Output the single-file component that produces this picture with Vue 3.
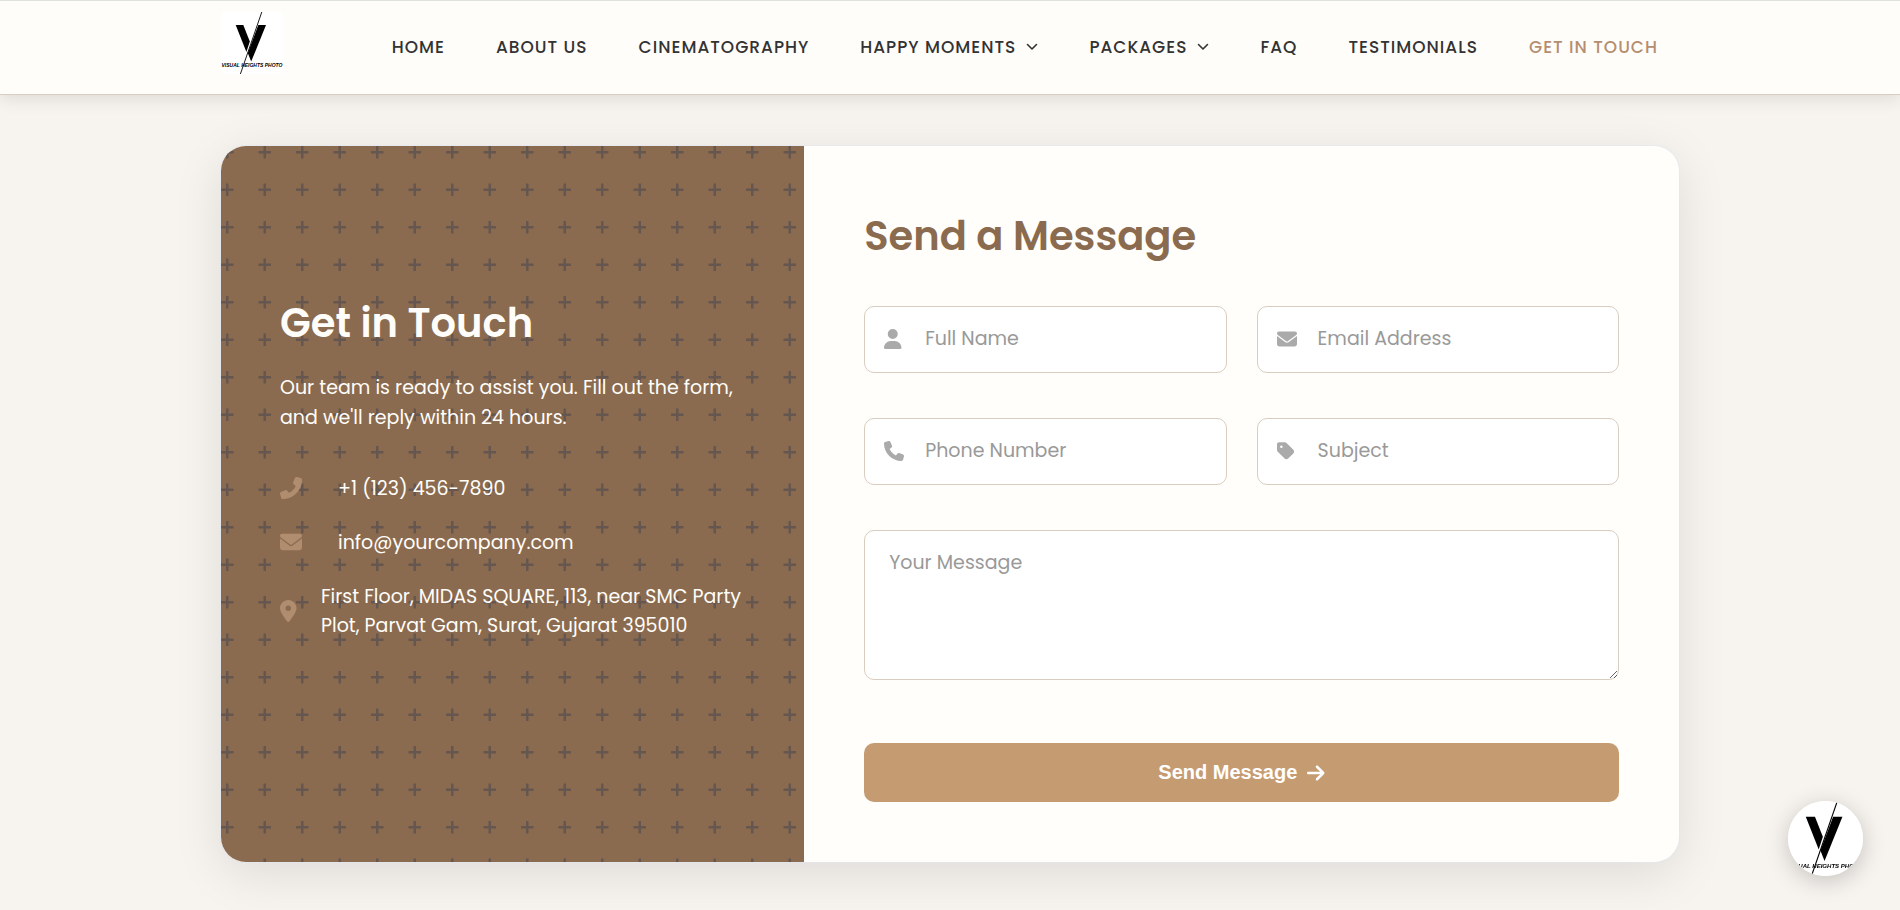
<template>
  <div class="page">
    <!-- Logo artwork, shared by the header and the floating button -->
    <svg class="sprite" aria-hidden="true">
      <symbol id="logo" viewBox="0 0 62 62">
        <rect width="62" height="62" rx="6" fill="#fff" />
        <path d="M14.7 13H22.3L28.8 29.6L25.4 40z" />
        <path d="M37.3 13H45L30.2 49.6L26.8 41z" />
        <path d="M40.8 0L19.4 62" stroke="#000" stroke-width="0.9" />
        <text x="0.5" y="55.2" class="logo-text">VISUAL HEIGHTS PHOTO</text>
      </symbol>
    </svg>

    <header class="site-header">
      <div class="header-inner">
        <a href="#" class="logo-link" aria-label="Visual Heights Photo">
          <svg class="logo"><use href="#logo" /></svg>
        </a>
        <nav class="nav">
          <a
            v-for="link in links"
            :key="link.label"
            href="#"
            class="nav-link"
            :class="{ active: link.active }"
          >
            {{ link.label }}
            <svg v-if="link.dropdown" class="chevron" viewBox="0 0 12 8">
              <path d="M1.5 1.5L6 6L10.5 1.5" />
            </svg>
          </a>
        </nav>
      </div>
    </header>

    <main class="contact-card">
      <section class="info-panel">
        <h2 class="title">Get in Touch</h2>
        <p class="info-text">
          Our team is ready to assist you. Fill out the form, and we'll reply within 24 hours.
        </p>
        <ul class="info-list">
          <li v-for="item in contacts" :key="item.text" class="info-item">
            <span class="info-icon" :class="{ narrow: item.icon === 'location' }">
              <svg :class="{ flipped: item.icon === 'phone' }" :viewBox="icons[item.icon].box">
                <path :d="icons[item.icon].path" />
              </svg>
            </span>
            <span>{{ item.text }}</span>
          </li>
        </ul>
      </section>

      <section class="form-panel">
        <h2 class="title">Send a Message</h2>
        <form class="form" @submit.prevent="sendMessage">
          <div v-for="field in fields" :key="field.id" class="field">
            <label :for="field.id" class="field-label">{{ field.label }}</label>
            <svg class="field-icon" :viewBox="icons[field.icon].box" aria-hidden="true">
              <path :d="icons[field.icon].path" />
            </svg>
            <input :id="field.id" v-model="form[field.id]" :type="field.type" :placeholder="field.label" />
          </div>
          <div class="field wide">
            <label for="message" class="field-label">Your Message</label>
            <textarea id="message" v-model="form.message" placeholder="Your Message"></textarea>
          </div>
          <button type="submit" class="submit-btn">
            Send Message
            <svg :viewBox="icons.arrow.box" aria-hidden="true"><path :d="icons.arrow.path" /></svg>
          </button>
        </form>
      </section>
    </main>

    <button type="button" class="floating-btn" aria-label="Chat with us">
      <svg><use href="#logo" /></svg>
    </button>
  </div>
</template>

<script setup>
import { reactive } from 'vue';

const links = [
  { label: 'HOME' },
  { label: 'ABOUT US' },
  { label: 'CINEMATOGRAPHY' },
  { label: 'HAPPY MOMENTS', dropdown: true },
  { label: 'PACKAGES', dropdown: true },
  { label: 'FAQ' },
  { label: 'TESTIMONIALS' },
  { label: 'GET IN TOUCH', active: true },
];

const contacts = [
  { icon: 'phone', text: '+1 (123) 456-7890' },
  { icon: 'envelope', text: 'info@yourcompany.com' },
  { icon: 'location', text: 'First Floor, MIDAS SQUARE, 113, near SMC Party Plot, Parvat Gam, Surat, Gujarat 395010' },
];

const fields = [
  { id: 'name', label: 'Full Name', icon: 'user', type: 'text' },
  { id: 'email', label: 'Email Address', icon: 'envelope', type: 'email' },
  { id: 'phone', label: 'Phone Number', icon: 'phone', type: 'tel' },
  { id: 'subject', label: 'Subject', icon: 'tag', type: 'text' },
];

const icons = {
  user: {
    box: '0 0 448 512',
    path: 'M224 256A128 128 0 1 0 224 0a128 128 0 1 0 0 256zm-45.7 48C79.8 304 0 383.8 0 482.3C0 498.7 13.3 512 29.7 512l388.6 0c16.4 0 29.7-13.3 29.7-29.7C448 383.8 368.2 304 269.7 304l-91.4 0z',
  },
  envelope: {
    box: '0 0 512 512',
    path: 'M48 64C21.5 64 0 85.5 0 112c0 15.1 7.1 29.3 19.2 38.4L236.8 313.6c11.4 8.5 27 8.5 38.4 0L492.8 150.4c12.1-9.1 19.2-23.3 19.2-38.4c0-26.5-21.5-48-48-48L48 64zM0 176L0 384c0 35.3 28.7 64 64 64l384 0c35.3 0 64-28.7 64-64l0-208L294.4 339.2c-22.8 17.1-54 17.1-76.8 0L0 176z',
  },
  phone: {
    box: '0 0 512 512',
    path: 'M164.9 24.6c-7.7-18.6-28-28.5-47.4-23.2l-88 24C12.1 30.2 0 46 0 64C0 311.4 200.6 512 448 512c18 0 33.8-12.1 38.6-29.5l24-88c5.3-19.4-4.6-39.7-23.2-47.4l-96-40c-16.3-6.8-35.2-2.1-46.3 11.6L304.7 368C234.3 334.7 177.3 277.7 144 207.3L193.3 167c13.7-11.2 18.4-30 11.6-46.3l-40-96z',
  },
  tag: {
    box: '0 0 448 512',
    path: 'M0 80V229.5c0 17 6.7 33.3 18.7 45.3l176 176c25 25 65.5 25 90.5 0L418.7 317.3c25-25 25-65.5 0-90.5l-176-176c-12-12-28.3-18.7-45.3-18.7H48C21.5 32 0 53.5 0 80zm112 32a32 32 0 1 1 0 64 32 32 0 1 1 0-64z',
  },
  location: {
    box: '0 0 384 512',
    path: 'M215.7 499.2C267 435 384 279.4 384 192C384 86 298 0 192 0S0 86 0 192c0 87.4 117 243 168.3 307.2c12.3 15.3 35.1 15.3 47.4 0zM192 128a64 64 0 1 1 0 128 64 64 0 1 1 0-128z',
  },
  arrow: {
    box: '0 0 448 512',
    path: 'M438.6 278.6c12.5-12.5 12.5-32.8 0-45.3l-160-160c-12.5-12.5-32.8-12.5-45.3 0s-12.5 32.8 0 45.3L338.8 224 32 224c-17.7 0-32 14.3-32 32s14.3 32 32 32l306.7 0L233.4 393.4c-12.5 12.5-12.5 32.8 0 45.3s32.8 12.5 45.3 0l160-160z',
  },
};

const form = reactive({ name: '', email: '', phone: '', subject: '', message: '' });

const sendMessage = () => {
  Object.keys(form).forEach((key) => {
    form[key] = '';
  });
};
</script>

<style>
body {
  background: #f7f3ef;
}
</style>

<style scoped>
* {
  box-sizing: border-box;
}

.page {
  font-family: Poppins, Inter, "Open Sans", sans-serif;
  color: #333;
}

.sprite {
  position: absolute;
  width: 0;
  height: 0;
}

.logo-text {
  font: italic bold 5px "Liberation Sans", Arial, sans-serif;
}

/* Header */
.site-header {
  position: relative;
  background: #fffdf9;
  border-top: 1px solid #dfe4df;
  border-bottom: 1px solid #d9cdc0;
  box-shadow: 0 4px 16px rgba(0, 0, 0, 0.1);
}

.header-inner {
  display: flex;
  align-items: center;
  justify-content: space-between;
  max-width: 1458px;
  height: 93px;
  margin: 0 auto;
  padding: 0 21px 2px 0;
}

.logo-link {
  display: block;
  height: 62px;
  margin-bottom: 8px;
}

.logo {
  width: 62px;
  height: 62px;
}

.nav {
  display: flex;
  gap: 51px;
}

.nav-link {
  display: flex;
  align-items: center;
  gap: 10px;
  font-size: 17px;
  font-weight: 500;
  line-height: 24px;
  letter-spacing: 1px;
  color: #333;
  text-decoration: none;
  white-space: nowrap;
}

.nav-link.active {
  color: #b58e70;
}

.chevron {
  width: 12px;
  height: 8px;
  fill: none;
  stroke: currentColor;
  stroke-width: 1.6;
  stroke-linecap: round;
  stroke-linejoin: round;
}

/* Card */
.contact-card {
  display: grid;
  grid-template-columns: 2fr 3fr;
  max-width: 1458px;
  margin: 51px auto 48px;
  border-radius: 25px;
  background: #fffefa;
  overflow: hidden;
  box-shadow: 0 0 0 1px rgba(226, 232, 240, 0.6), 0 12px 50px rgba(0, 0, 0, 0.1);
}

.title {
  margin: 0;
  font-size: 40px;
  font-weight: 600;
  line-height: 60px;
}

/* Left panel with the plus pattern */
.info-panel {
  display: flex;
  flex-direction: column;
  justify-content: center;
  padding: 60px 59px;
  color: #fffdf9;
  background-color: #8b6b4f;
  background-image: url("data:image/svg+xml,%3Csvg xmlns='http://www.w3.org/2000/svg' viewBox='0 0 60 60'%3E%3Cpath fill='%23665650' d='M36 34v-4h-2v4h-4v2h4v4h2v-4h4v-2h-4zm0-30V0h-2v4h-4v2h4v4h2V6h4V4h-4zM6 34v-4H4v4H0v2h4v4h2v-4h4v-2H6zM6 4V0H4v4H0v2h4v4h2V6h4V4H6z'/%3E%3C/svg%3E");
  background-size: 75px 75px;
}

.info-text {
  margin: 20px 0 41px;
  font-size: 19px;
  line-height: 30px;
}

.info-list {
  display: flex;
  flex-direction: column;
  gap: 25px;
  margin: 0 0 76px;
  padding: 0;
  list-style: none;
}

.info-item {
  display: flex;
  align-items: center;
  gap: 18px;
  font-size: 19px;
  line-height: 29px;
}

.info-icon {
  flex: none;
  display: flex;
  width: 40px;
}

.info-icon.narrow {
  width: 23px;
}

.info-icon svg {
  height: 22px;
  fill: #b08d6f;
}

.info-icon .flipped {
  transform: scaleX(-1);
}

/* Form */
.form-panel {
  padding: 60px;
}

.form-panel .title {
  margin-bottom: 40px;
  color: #8b6b4f;
}

.form {
  display: grid;
  grid-template-columns: 1fr 1fr;
  gap: 45px 30px;
}

.field {
  position: relative;
}

.wide,
.submit-btn {
  grid-column: 1 / -1;
}

/* The placeholder shows the same text, the label stays for screen readers */
.field-label {
  position: absolute;
  top: 17px;
  left: 60px;
  opacity: 0;
  pointer-events: none;
}

.field-icon {
  position: absolute;
  top: 23px;
  left: 20px;
  height: 20px;
  fill: #aaa;
}

input,
textarea {
  display: block;
  width: 100%;
  border: 1px solid #d9cdc0;
  border-radius: 10px;
  background: #fff;
  font-family: inherit;
  font-size: 19px;
  line-height: 30px;
  color: #333;
}

input {
  height: 67px;
  padding: 0 20px 2px 60px;
}

textarea {
  height: 150px;
  padding: 17px 24px;
  resize: vertical;
}

input::placeholder,
textarea::placeholder {
  color: #999;
}

.submit-btn {
  display: flex;
  align-items: center;
  justify-content: center;
  gap: 10px;
  height: 59px;
  margin-top: 18px;
  border: none;
  border-radius: 10px;
  background: #c59b72;
  color: #fff;
  font-family: "Liberation Sans", Arial, sans-serif;
  font-size: 20px;
  font-weight: bold;
  cursor: pointer;
}

.submit-btn svg {
  height: 20px;
  fill: currentColor;
}

/* Floating button over the page corner */
.floating-btn {
  position: fixed;
  right: 37px;
  bottom: 34px;
  width: 75px;
  height: 75px;
  padding: 0;
  border: none;
  border-radius: 50%;
  background: #fff;
  overflow: hidden;
  box-shadow: 0 5px 25px rgba(0, 0, 0, 0.2);
  cursor: pointer;
}

.floating-btn svg {
  display: block;
  width: 75px;
  height: 75px;
}
</style>
